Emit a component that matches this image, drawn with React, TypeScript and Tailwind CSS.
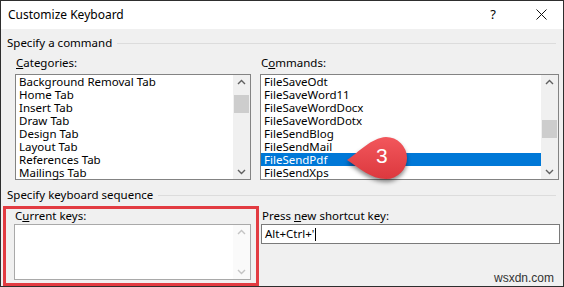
const categories = [
  "Background Removal Tab",
  "Home Tab",
  "Insert Tab",
  "Draw Tab",
  "Design Tab",
  "Layout Tab",
  "References Tab",
  "Mailings Tab",
];

const commands = [
  "FileSaveOdt",
  "FileSaveWord11",
  "FileSaveWordDocx",
  "FileSaveWordDotx",
  "FileSendBlog",
  "FileSendMail",
  "FileSendPdf",
  "FileSendXps",
];

function Chevron({ up, color }: { up?: boolean; color: string }) {
  return (
    <svg width="9" height="6" viewBox="0 0 9 6" fill="none">
      <polyline
        points={up ? "1,5 4.5,1.5 8,5" : "1,1 4.5,4.5 8,1"}
        stroke={color}
        strokeWidth="1.4"
      />
    </svg>
  );
}

function ScrollBar({ thumbTop, disabled }: { thumbTop?: number; disabled?: boolean }) {
  const color = disabled ? "#c4c4c4" : "#606060";
  return (
    <div className={`flex w-[17px] flex-col ${disabled ? "bg-[#fafafa]" : "bg-[#f0f0f0]"}`}>
      <div className="flex h-[14px] items-center justify-center">
        <Chevron up color={color} />
      </div>
      <div className="flex-1 px-[1px]">
        {thumbTop !== undefined && (
          <div className="h-[18px] bg-[#cdcdcd]" style={{ marginTop: thumbTop }} />
        )}
      </div>
      <div className="flex h-[15px] items-center justify-center">
        <Chevron color={color} />
      </div>
    </div>
  );
}

function ListBox({
  items,
  selected,
  thumbTop,
}: {
  items: string[];
  selected?: number;
  thumbTop: number;
}) {
  return (
    <div className="flex h-[106px] border border-[#838383] bg-white">
      <div className="flex flex-1 flex-col">
        {items.map((item, idx) => (
          <div
            key={item}
            className={`h-[13px] pl-[3px] leading-[13px] ${
              idx === selected ? "bg-[#0078d7] text-white" : "text-black"
            }`}
          >
            {item}
          </div>
        ))}
      </div>
      <ScrollBar thumbTop={thumbTop} />
    </div>
  );
}

function GroupHeader({ title }: { title: string }) {
  return (
    <div className="flex h-[14px] items-center gap-[5px] pl-[6px] pr-[7px]">
      <span className="leading-[14px]">{title}</span>
      <div className="h-px flex-1 bg-[#dcdcdc]" />
    </div>
  );
}

export default function App() {
  return (
    <div className="relative flex h-[287px] w-[564px] flex-col overflow-hidden border border-[#2e2e2e] bg-[#f0f0f0] font-['Noto_Sans',sans-serif] text-[11.5px] text-black">
      {/* title bar */}
      <div className="flex h-[28px] items-center bg-white pl-[7px] pb-[1px]">
        <span className="text-[12px]">Customize Keyboard</span>
        <span className="ml-auto mr-[40px] text-[13px]">?</span>
        <svg width="11" height="11" viewBox="0 0 11 11" className="mr-[16px]">
          <path d="M0.5 0.5 L10.5 10.5 M10.5 0.5 L0.5 10.5" stroke="#111" strokeWidth="1" />
        </svg>
      </div>

      <div className="mt-[7px]">
        <GroupHeader title="Specify a command" />
      </div>

      <div className="mt-[6px] flex gap-[9px] pl-[14px]">
        <div className="flex w-[236px] flex-col">
          <div className="h-[14px] pl-[1px] leading-[14px]">
            <u>C</u>ategories:
          </div>
          <div className="mt-[4px]">
            <ListBox items={categories} thumbTop={6} />
          </div>
        </div>
        <div className="flex w-[299px] flex-col">
          <div className="h-[14px] pl-[1px] leading-[14px]">
            C<u>o</u>mmands:
          </div>
          <div className="mt-[4px]">
            <ListBox items={commands} selected={6} thumbTop={31} />
          </div>
        </div>
      </div>

      <div className="mt-[8px]">
        <GroupHeader title="Specify keyboard sequence" />
      </div>

      <div className="mt-[4px] flex gap-[2px] pl-[2px]">
        <div className="flex h-[80px] w-[256px] flex-col border-[3px] border-[#e23b41] pl-[8px] pr-[5px]">
          <div className="h-[14px] pl-[1px] leading-[14px]">
            C<u>u</u>rrent keys:
          </div>
          <div className="mt-[1px] flex h-[56px] border border-[#a9a9a9] bg-white">
            <div className="flex-1" />
            <ScrollBar disabled />
          </div>
        </div>
        <div className="flex h-[80px] w-[299px] flex-col pt-[3px] pb-[1px]">
          <div className="h-[14px] pl-[1px] leading-[14px]">
            Press <u>n</u>ew shortcut key:
          </div>
          <div className="mt-[1px] flex h-[20px] items-center border border-[#7a7a7a] bg-white pl-[3px]">
            <span>Alt+Ctrl+'</span>
            <span className="ml-[1px] h-[13px] w-px bg-black" />
          </div>
          <div className="mt-auto pr-[6px] text-right font-['Liberation_Sans',sans-serif] text-[12px] leading-[14px] text-[#333]">
            wsxdn.com
          </div>
        </div>
      </div>

      {/* callout annotation */}
      <div className="absolute left-[338px] top-[128px] h-[56px] w-[76px]">
        <svg
          width="76"
          height="56"
          viewBox="0 0 76 56"
          className="drop-shadow-[0_3px_2px_rgba(0,0,0,0.45)]"
        >
          <defs>
            <linearGradient id="cg" x1="0" y1="0" x2="0" y2="1">
              <stop offset="0" stopColor="#f2575c" />
              <stop offset="1" stopColor="#dc383e" />
            </linearGradient>
          </defs>
          <path
            d="M8 31 C20 23 32 9 47 8 A21 21 0 1 1 47 50 C32 50 20 39 8 31 Z"
            fill="url(#cg)"
          />
        </svg>
        <span className="absolute left-[37px] top-[15px] font-['Liberation_Sans',sans-serif] text-[21px] leading-[24px] text-white">
          3
        </span>
      </div>
    </div>
  );
}
